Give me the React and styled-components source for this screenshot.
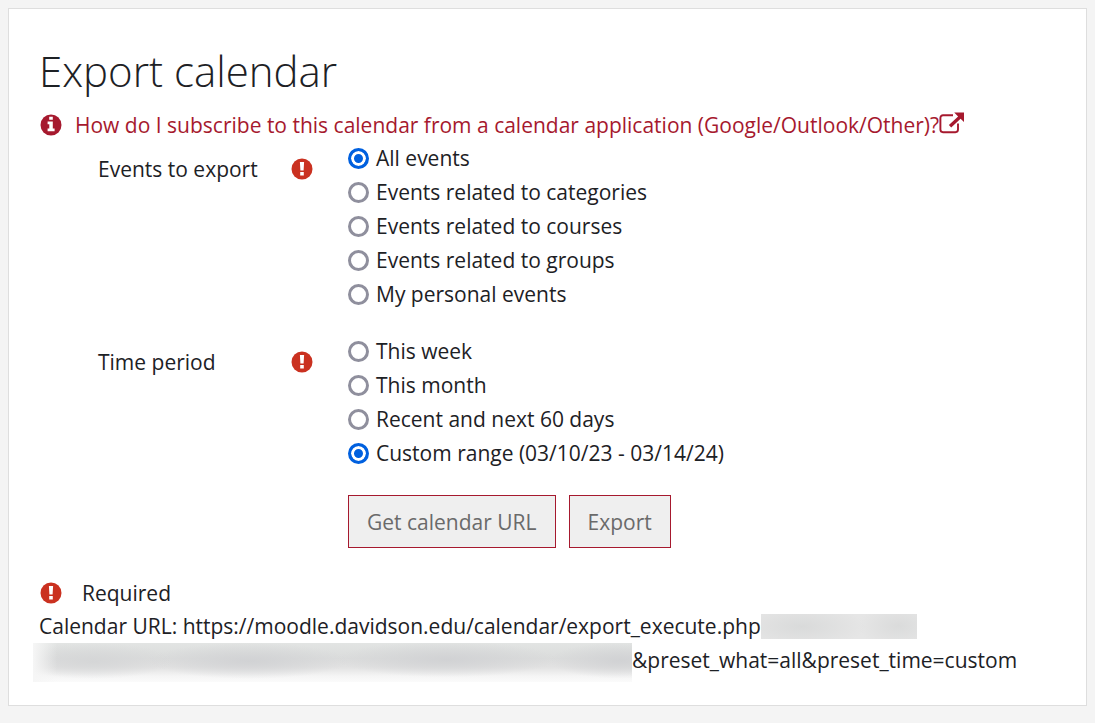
import React, { useState } from 'react';
import styled, { createGlobalStyle } from 'styled-components';

const GlobalStyle = createGlobalStyle`
  *, *::before, *::after {
    box-sizing: border-box;
  }
  body {
    margin: 0;
    background-color: #f4f4f4;
    color: #1d2125;
    font-family: "Segoe UI", "Open Sans", "Noto Sans", sans-serif;
    font-size: 21px;
    line-height: 34px;
  }
`;

const Page = styled.main`
  padding: 8px;
`;

const Card = styled.section`
  padding: 35px 30px 28px;
  background-color: white;
  border: 1px solid #dedede;
`;

const Title = styled.h1`
  margin: 0 0 10px;
  font-size: 42px;
  font-weight: 300;
  line-height: 54px;
`;

const HelpLink = styled.a`
  display: flex;
  align-items: center;
  height: 33px;
  color: #a6192e;
  text-decoration: none;
  &:hover span {
    text-decoration: underline;
  }
`;

const Icon = styled.svg`
  width: 24px;
  height: 24px;
  flex: none;
  color: ${(props) => props.$color || 'inherit'};
`;

const ExternalIcon = styled.svg`
  width: 26px;
  height: 26px;
  flex: none;
`;

const LinkText = styled.span`
  margin-left: 12px;
`;

const FieldSet = styled.div`
  display: grid;
  grid-template-columns: 250px 1fr;
  margin: 0 0 23px 59px;
`;

const FieldLabel = styled.div`
  display: flex;
  align-items: center;
  justify-content: space-between;
  height: 34px;
  margin-top: 11px;
  padding-right: 34px;
`;

const Option = styled.label`
  display: flex;
  align-items: center;
  gap: 7px;
  width: fit-content;
`;

const Radio = styled.input`
  appearance: none;
  flex: none;
  width: 21px;
  height: 21px;
  margin: 0;
  border: 3px solid #8f8f9d;
  border-radius: 50%;
  background-color: white;
  &:checked {
    border-color: #0060df;
    background-color: #0060df;
    box-shadow: inset 0 0 0 3px white;
  }
`;

const Buttons = styled.div`
  display: flex;
  gap: 13px;
  margin: 0 0 28px 309px;
  padding-top: 2px;
`;

const Button = styled.button`
  height: 53px;
  padding: 0 18px;
  border: 1px solid #a6192e;
  background-color: #efefef;
  color: #6a6a6a;
  font: inherit;
  cursor: pointer;
`;

const Required = styled.div`
  display: flex;
  align-items: center;
  gap: 19px;
  height: 33px;
`;

const CalendarUrl = styled.p`
  margin: 0;
`;

const Redacted = styled.span`
  display: inline-block;
  vertical-align: top;
`;

const RedactedShort = styled(Redacted)`
  width: 156px;
  height: 25px;
  margin-top: 5px;
  background:
    radial-gradient(ellipse 64px 22px at 26% 50%, #d9dada, #d9dada00),
    radial-gradient(ellipse 40px 22px at 88% 48%, #dadbdb, #dadbdb00),
    #e6e6e6;
`;

const RedactedLong = styled(Redacted)`
  width: 599px;
  height: 39px;
  margin: 0 0 -5px -6px;
  background:
    linear-gradient(to right, #f6f6f6, #f6f6f600 24px),
    radial-gradient(ellipse 80px 18px at 10% 46%, #d5d6d7, #d5d6d700),
    radial-gradient(ellipse 100px 18px at 36% 46%, #d1d2d4, #d1d2d400),
    radial-gradient(ellipse 110px 18px at 69% 42%, #d1d2d4, #d1d2d400),
    radial-gradient(ellipse 70px 18px at 98% 45%, #d1d2d4, #d1d2d400),
    linear-gradient(to bottom, #e2e4e3, #dbdcdc 40%, #e2e2e2 62%, #f5f5f5 85%, #fbfbfb);
`;

const InfoIcon = () => (
  <Icon viewBox="0 0 24 24" aria-hidden="true">
    <circle cx="12" cy="12" r="10.5" fill="currentColor" />
    <path d="M10.2 3.8h3.6v3h-3.6zM8.6 8.6h5.2v6.9h1.8v2.7H8.6v-2.7h1.7v-4.2H8.6z" fill="white" />
  </Icon>
);

const RequiredIcon = () => (
  <Icon viewBox="0 0 24 24" $color="#ca3120" role="img" aria-label="Required">
    <circle cx="12" cy="12" r="10.5" fill="currentColor" />
    <path d="M9.9 4.9h4.2l-.5 8.7h-3.2zM10.2 15h3.6v3.4h-3.6z" fill="white" />
  </Icon>
);

const ExternalLinkIcon = () => (
  <ExternalIcon viewBox="0 0 26 26" aria-hidden="true">
    <path
      d="M14 3.2H4a2.6 2.6 0 0 0-2.6 2.6v11.8A2.6 2.6 0 0 0 4 20.2h12.4a2.6 2.6 0 0 0 2.6-2.6V11.5"
      fill="none"
      stroke="currentColor"
      strokeWidth="1.9"
    />
    <path d="M15.2.4H25V10l-3.4-3.2-9.4 8.7-2.3-2.4 9.2-8.6z" fill="currentColor" />
  </ExternalIcon>
);

const events = [
  'All events',
  'Events related to categories',
  'Events related to courses',
  'Events related to groups',
  'My personal events',
];

const periods = [
  'This week',
  'This month',
  'Recent and next 60 days',
  'Custom range (03/10/23 - 03/14/24)',
];

const RadioField = ({ name, label, options, value, onChange }) => (
  <FieldSet role="radiogroup" aria-labelledby={`${name}-label`}>
    <FieldLabel>
      <span id={`${name}-label`}>{label}</span>
      <RequiredIcon />
    </FieldLabel>
    <div>
      {options.map((option) => (
        <Option key={option}>
          <Radio
            type="radio"
            name={name}
            checked={value === option}
            onChange={() => onChange(option)}
          />
          {option}
        </Option>
      ))}
    </div>
  </FieldSet>
);

const App = () => {
  const [event, setEvent] = useState(events[0]);
  const [period, setPeriod] = useState(periods[3]);

  return (
    <>
      <GlobalStyle />
      <Page>
        <Card>
          <Title>Export calendar</Title>
          <HelpLink href="#subscribe">
            <InfoIcon />
            <LinkText>
              How do I subscribe to this calendar from a calendar application (Google/Outlook/Other)?
            </LinkText>
            <ExternalLinkIcon />
          </HelpLink>
          <form onSubmit={(e) => e.preventDefault()}>
            <RadioField
              name="events"
              label="Events to export"
              options={events}
              value={event}
              onChange={setEvent}
            />
            <RadioField
              name="period"
              label="Time period"
              options={periods}
              value={period}
              onChange={setPeriod}
            />
            <Buttons>
              <Button type="button">Get calendar URL</Button>
              <Button type="submit">Export</Button>
            </Buttons>
            <Required>
              <RequiredIcon />
              Required
            </Required>
          </form>
          <CalendarUrl>
            Calendar URL: https://moodle.davidson.edu/calendar/export_execute.php
            <RedactedShort />
            <RedactedLong />
            &amp;preset_what=all&amp;preset_time=custom
          </CalendarUrl>
        </Card>
      </Page>
    </>
  );
};

export default App;
